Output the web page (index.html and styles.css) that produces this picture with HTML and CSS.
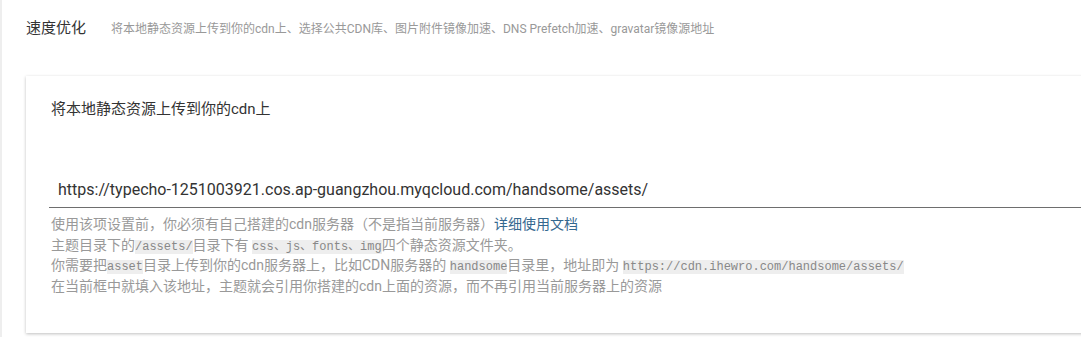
FILE: index.html
```html
<!DOCTYPE html>
<html lang="zh-CN">
<head>
    <meta charset="UTF-8">
    <title>速度优化</title>
    <link rel="stylesheet" href="styles.css">
</head>
<body>
    <div class="page">
        <div class="section-head">
            <h2>速度优化</h2>
            <span class="section-desc">将本地静态资源上传到你的cdn上、选择公共CDN库、图片附件镜像加速、DNS Prefetch加速、gravatar镜像源地址</span>
        </div>
        <div class="card">
            <label class="field-label" for="cdnUrl">将本地静态资源上传到你的cdn上</label>
            <input class="field-input" type="text" id="cdnUrl" value="https://typecho-1251003921.cos.ap-guangzhou.myqcloud.com/handsome/assets/">
            <div class="field-help">
                <p>使用该项设置前，你必须有自己搭建的cdn服务器（不是指当前服务器）<a href="#">详细使用文档</a></p>
                <p>主题目录下的<code>/assets/</code>目录下有 <code>css、js、fonts、img</code>四个静态资源文件夹。</p>
                <p>你需要把<code>asset</code>目录上传到你的cdn服务器上，比如CDN服务器的 <code>handsome</code>目录里，地址即为 <code>https://cdn.ihewro.com/handsome/assets/</code></p>
                <p>在当前框中就填入该地址，主题就会引用你搭建的cdn上面的资源，而不再引用当前服务器上的资源</p>
            </div>
        </div>
    </div>
</body>
</html>
```

FILE: styles.css
```css
body {
    margin: 0;
    background: #ffffff;
    font-family: Roboto, "Noto Sans CJK SC", sans-serif;
    color: #333;
    overflow: hidden;
}
.page {
    border-left: 2px solid #eeeeee;
    padding: 16px 0 0 24px;
    height: 337px;
    box-sizing: border-box;
}
.section-head {
    display: flex;
    align-items: baseline;
}
.section-head h2 {
    margin: 0;
    font-size: 15px;
    font-weight: normal;
    line-height: 24px;
    color: #333;
}
.section-desc {
    margin-left: 25px;
    font-size: 12px;
    color: #999;
}
.card {
    margin-top: 36px;
    width: 1100px;
    height: 257px;
    box-sizing: border-box;
    padding: 22px 25px 0 25px;
    background: #fff;
    box-shadow: 0 1px 3px rgba(0, 0, 0, 0.25);
}
.field-label {
    display: block;
    font-size: 15px;
    line-height: 22px;
    color: #333;
}
.field-input {
    display: block;
    box-sizing: border-box;
    width: 100%;
    height: 37px;
    margin: 51px 0 0 -2px;
    padding: 0 9px;
    border: none;
    border-bottom: 1px solid #6e6e6e;
    font-family: Roboto, sans-serif;
    font-size: 16px;
    color: #333;
    outline: none;
}
.field-help {
    margin-top: 6px;
    font-size: 14px;
    color: #999;
}
.field-help p {
    margin: 0;
    height: 20.5px;
    line-height: 20.5px;
}
.field-help a {
    color: #34688f;
    text-decoration: none;
}
.field-help code {
    font-family: "Liberation Mono", monospace;
    font-size: 12px;
    line-height: 1;
    background: #eeeeee;
    color: #888;
}
```
